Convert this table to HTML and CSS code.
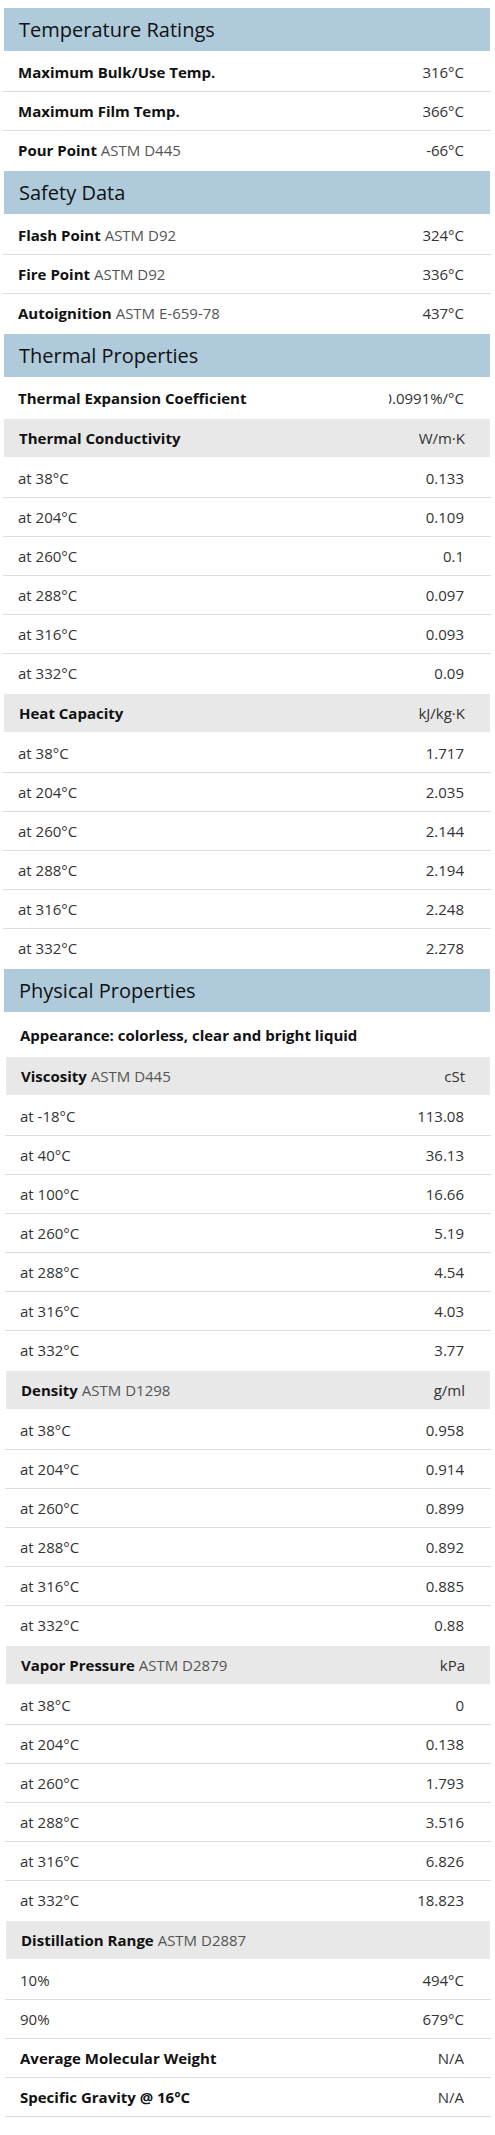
FILE: index.html
```html
<!DOCTYPE html>
<html lang="en">
<head>
<meta charset="utf-8">
<title>Fluid Properties</title>
<link rel="stylesheet" href="styles.css">
</head>
<body>
<div class="sheet">
  <div class="sec">
    <h2 class="sec-head">Temperature Ratings</h2>
    <div class="rows">
      <div class="row"><span class="label"><b>Maximum Bulk/Use Temp.</b></span><span class="val"><span>316°C</span></span></div>
      <div class="row"><span class="label"><b>Maximum Film Temp.</b></span><span class="val"><span>366°C</span></span></div>
      <div class="row"><span class="label"><b>Pour Point</b> <span class="std">ASTM D445</span></span><span class="val"><span>-66°C</span></span></div>
    </div>
  </div>

  <div class="sec">
    <h2 class="sec-head">Safety Data</h2>
    <div class="rows">
      <div class="row"><span class="label"><b>Flash Point</b> <span class="std">ASTM D92</span></span><span class="val"><span>324°C</span></span></div>
      <div class="row"><span class="label"><b>Fire Point</b> <span class="std">ASTM D92</span></span><span class="val"><span>336°C</span></span></div>
      <div class="row"><span class="label"><b>Autoignition</b> <span class="std">ASTM E-659-78</span></span><span class="val"><span>437°C</span></span></div>
    </div>
  </div>

  <div class="sec">
    <h2 class="sec-head">Thermal Properties</h2>
    <div class="rows">
      <div class="row"><span class="label"><b>Thermal Expansion Coefficient</b></span><span class="val"><span>0.0991%/°C</span></span></div>
    </div>
    <div class="group-head"><span class="label"><b>Thermal Conductivity</b></span><span class="val"><span>W/m·K</span></span></div>
    <div class="rows">
      <div class="row"><span class="label">at 38°C</span><span class="val"><span>0.133</span></span></div>
      <div class="row"><span class="label">at 204°C</span><span class="val"><span>0.109</span></span></div>
      <div class="row"><span class="label">at 260°C</span><span class="val"><span>0.1</span></span></div>
      <div class="row"><span class="label">at 288°C</span><span class="val"><span>0.097</span></span></div>
      <div class="row"><span class="label">at 316°C</span><span class="val"><span>0.093</span></span></div>
      <div class="row"><span class="label">at 332°C</span><span class="val"><span>0.09</span></span></div>
    </div>
    <div class="group-head"><span class="label"><b>Heat Capacity</b></span><span class="val"><span>kJ/kg·K</span></span></div>
    <div class="rows">
      <div class="row"><span class="label">at 38°C</span><span class="val"><span>1.717</span></span></div>
      <div class="row"><span class="label">at 204°C</span><span class="val"><span>2.035</span></span></div>
      <div class="row"><span class="label">at 260°C</span><span class="val"><span>2.144</span></span></div>
      <div class="row"><span class="label">at 288°C</span><span class="val"><span>2.194</span></span></div>
      <div class="row"><span class="label">at 316°C</span><span class="val"><span>2.248</span></span></div>
      <div class="row"><span class="label">at 332°C</span><span class="val"><span>2.278</span></span></div>
    </div>
  </div>

  <div class="sec">
    <h2 class="sec-head">Physical Properties</h2>
    <div class="shift">
      <div class="appearance"><b>Appearance: colorless, clear and bright liquid</b></div>
      <div class="group-head"><span class="label"><b>Viscosity</b> <span class="std">ASTM D445</span></span><span class="val"><span>cSt</span></span></div>
      <div class="rows">
        <div class="row"><span class="label">at -18°C</span><span class="val"><span>113.08</span></span></div>
        <div class="row"><span class="label">at 40°C</span><span class="val"><span>36.13</span></span></div>
        <div class="row"><span class="label">at 100°C</span><span class="val"><span>16.66</span></span></div>
        <div class="row"><span class="label">at 260°C</span><span class="val"><span>5.19</span></span></div>
        <div class="row"><span class="label">at 288°C</span><span class="val"><span>4.54</span></span></div>
        <div class="row"><span class="label">at 316°C</span><span class="val"><span>4.03</span></span></div>
        <div class="row"><span class="label">at 332°C</span><span class="val"><span>3.77</span></span></div>
      </div>
      <div class="group-head"><span class="label"><b>Density</b> <span class="std">ASTM D1298</span></span><span class="val"><span>g/ml</span></span></div>
      <div class="rows">
        <div class="row"><span class="label">at 38°C</span><span class="val"><span>0.958</span></span></div>
        <div class="row"><span class="label">at 204°C</span><span class="val"><span>0.914</span></span></div>
        <div class="row"><span class="label">at 260°C</span><span class="val"><span>0.899</span></span></div>
        <div class="row"><span class="label">at 288°C</span><span class="val"><span>0.892</span></span></div>
        <div class="row"><span class="label">at 316°C</span><span class="val"><span>0.885</span></span></div>
        <div class="row"><span class="label">at 332°C</span><span class="val"><span>0.88</span></span></div>
      </div>
      <div class="group-head"><span class="label"><b>Vapor Pressure</b> <span class="std">ASTM D2879</span></span><span class="val"><span>kPa</span></span></div>
      <div class="rows">
        <div class="row"><span class="label">at 38°C</span><span class="val"><span>0</span></span></div>
        <div class="row"><span class="label">at 204°C</span><span class="val"><span>0.138</span></span></div>
        <div class="row"><span class="label">at 260°C</span><span class="val"><span>1.793</span></span></div>
        <div class="row"><span class="label">at 288°C</span><span class="val"><span>3.516</span></span></div>
        <div class="row"><span class="label">at 316°C</span><span class="val"><span>6.826</span></span></div>
        <div class="row"><span class="label">at 332°C</span><span class="val"><span>18.823</span></span></div>
      </div>
      <div class="group-head"><span class="label"><b>Distillation Range</b> <span class="std">ASTM D2887</span></span></div>
      <div class="rows closed">
        <div class="row"><span class="label">10%</span><span class="val"><span>494°C</span></span></div>
        <div class="row"><span class="label">90%</span><span class="val"><span>679°C</span></span></div>
        <div class="row"><span class="label"><b>Average Molecular Weight</b></span><span class="val"><span>N/A</span></span></div>
        <div class="row"><span class="label"><b>Specific Gravity @ 16°C</b></span><span class="val"><span>N/A</span></span></div>
      </div>
    </div>
  </div>
</div>
</body>
</html>
```

FILE: styles.css
```css
html, body {
  margin: 0;
  padding: 0;
  background: #ffffff;
}

body {
  font-family: "Open Sans", "Liberation Sans", sans-serif;
  font-size: 15px;
  color: #333333;
}

.sheet {
  width: 488px;
  margin-left: 3px;
  padding-top: 6.5px;
}

.sec-head {
  margin: 1.5px 1px;
  height: 43px;
  box-sizing: border-box;
  padding-left: 15px;
  display: flex;
  align-items: center;
  background: #aecadb;
  color: #111111;
  font-size: 20px;
  font-weight: 400;
}

.group-head {
  margin: 1.5px 1px;
  height: 38px;
  box-sizing: border-box;
  padding-left: 15px;
  display: flex;
  align-items: center;
  justify-content: space-between;
  background: #e8e8e8;
}

.group-head .val {
  padding-right: 25px;
}

.row {
  height: 39px;
  box-sizing: border-box;
  padding-left: 15px;
  border-bottom: 1px solid #dddddd;
  display: flex;
  align-items: center;
  justify-content: space-between;
}

.rows > .row:last-child {
  border-bottom-color: transparent;
}

.rows.closed > .row:last-child {
  border-bottom-color: #dddddd;
}

.label {
  white-space: nowrap;
  color: #333333;
}

.label b,
.appearance b {
  font-weight: 700;
  color: #111111;
}

.std {
  color: #555555;
}

.val {
  flex: none;
  width: 102px;
  box-sizing: border-box;
  padding-right: 27px;
  display: flex;
  justify-content: flex-end;
  overflow: hidden;
  white-space: nowrap;
  color: #333333;
}

.val > span {
  flex: none;
}

.shift {
  margin-left: 2px;
}

.appearance {
  height: 42px;
  box-sizing: border-box;
  padding-left: 15px;
  display: flex;
  align-items: center;
}
```
